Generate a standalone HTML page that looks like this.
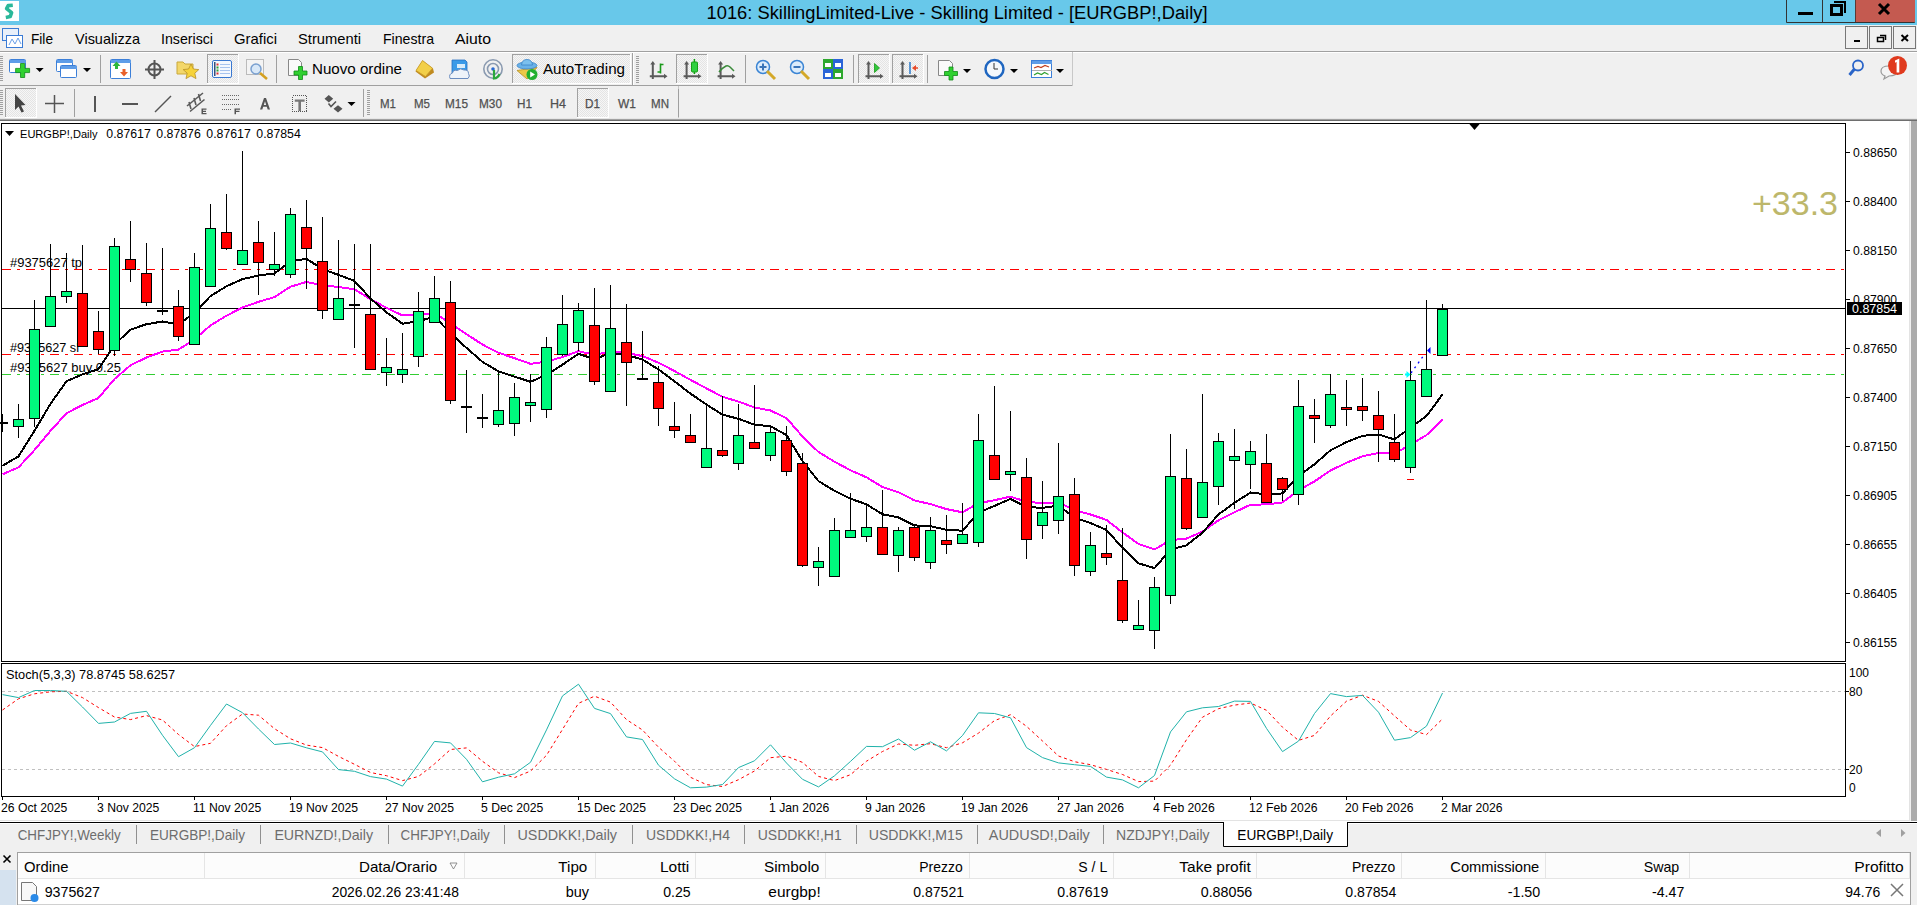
<!DOCTYPE html><html><head><meta charset="utf-8"><style>
*{margin:0;padding:0}
html,body{width:1917px;height:905px;overflow:hidden;background:#f0f0f0}
svg{display:block;font-family:"Liberation Sans", sans-serif}
</style></head><body><svg width="1917" height="905" viewBox="0 0 1917 905"><defs><pattern id="chk" width="2" height="2" patternUnits="userSpaceOnUse"><rect width="2" height="2" fill="#f6f6f6"/><rect width="1" height="1" fill="#e4e4e4"/><rect x="1" y="1" width="1" height="1" fill="#e4e4e4"/></pattern></defs><rect x="0" y="0" width="1917" height="905" fill="#f0f0f0"/><rect x="0" y="0" width="1917" height="25" fill="#68c8ea"/><rect x="0" y="1" width="19" height="20" fill="#ffffff"/><path d="M12.8,5.2 L8.2,5.6 L6.6,8.6 L11.6,12.6 L10.2,16.6 L5.8,17.4" fill="none" stroke="#2ab89a" stroke-width="3.6" stroke-linejoin="round"/><text x="957" y="19" font-size="18" fill="#000" text-anchor="middle" font-weight="normal" textLength="501" lengthAdjust="spacingAndGlyphs" xml:space="preserve">1016: SkillingLimited-Live - Skilling Limited - [EURGBP!,Daily]</text><path d="M1786.5,0 V22.5 H1914.5 V0" fill="none" stroke="#333" stroke-width="1"/><rect x="1855" y="0" width="60" height="22" fill="#c45a50"/><rect x="1855" y="0" width="1" height="22" fill="#5a3a36"/><line x1="1822.5" y1="0" x2="1822.5" y2="22" stroke="#333"/><rect x="1798" y="12" width="15" height="3" fill="#000"/><rect x="1831.5" y="5.5" width="10" height="9" fill="none" stroke="#000" stroke-width="3"/><path d="M1834,2 H1845 V13" fill="none" stroke="#000" stroke-width="2"/><path d="M1879,4 L1889,14 M1889,4 L1879,14" stroke="#000" stroke-width="3"/><rect x="2.5" y="28.5" width="16" height="12" fill="#e8f0fa" stroke="#3a7bd5"/><rect x="6.5" y="35.5" width="16" height="12" fill="#ffffff" stroke="#3a7bd5"/><path d="M9,45 L12,39 L15,44 L18,38 L21,44" fill="none" stroke="#6aa0e8"/><text x="31" y="44" font-size="15" fill="#000" text-anchor="start" font-weight="normal" textLength="22" lengthAdjust="spacingAndGlyphs" xml:space="preserve">File</text><text x="75" y="44" font-size="15" fill="#000" text-anchor="start" font-weight="normal" textLength="65" lengthAdjust="spacingAndGlyphs" xml:space="preserve">Visualizza</text><text x="161" y="44" font-size="15" fill="#000" text-anchor="start" font-weight="normal" textLength="52" lengthAdjust="spacingAndGlyphs" xml:space="preserve">Inserisci</text><text x="234" y="44" font-size="15" fill="#000" text-anchor="start" font-weight="normal" textLength="43" lengthAdjust="spacingAndGlyphs" xml:space="preserve">Grafici</text><text x="298" y="44" font-size="15" fill="#000" text-anchor="start" font-weight="normal" textLength="63" lengthAdjust="spacingAndGlyphs" xml:space="preserve">Strumenti</text><text x="383" y="44" font-size="15" fill="#000" text-anchor="start" font-weight="normal" textLength="51" lengthAdjust="spacingAndGlyphs" xml:space="preserve">Finestra</text><text x="455" y="44" font-size="15" fill="#000" text-anchor="start" font-weight="normal" textLength="36" lengthAdjust="spacingAndGlyphs" xml:space="preserve">Aiuto</text><rect x="1845.5" y="26.5" width="22" height="22" fill="#f0f0f0" stroke="#777" stroke-width="1"/><rect x="1869.5" y="26.5" width="22" height="22" fill="#f0f0f0" stroke="#777" stroke-width="1"/><rect x="1893.5" y="26.5" width="22" height="22" fill="#f0f0f0" stroke="#777" stroke-width="1"/><rect x="1854" y="40" width="6" height="2" fill="#000"/><rect x="1877.5" y="37.5" width="6" height="4" fill="none" stroke="#000" stroke-width="1.5"/><path d="M1880,35.5 H1885.5 V40" fill="none" stroke="#000" stroke-width="1.5"/><path d="M1901.5,35 L1908,41 M1908,35 L1901.5,41" stroke="#000" stroke-width="2"/><rect x="0" y="51" width="1917" height="1" fill="#a0a0a0"/><rect x="0" y="52" width="1917" height="1" fill="#ffffff"/><rect x="0" y="85" width="1072" height="1" fill="#a0a0a0"/><rect x="1072" y="52" width="1" height="34" fill="#c8c8c8"/><rect x="0" y="56" width="3" height="1" fill="#a0a0a0"/><rect x="0" y="58" width="3" height="1" fill="#a0a0a0"/><rect x="0" y="60" width="3" height="1" fill="#a0a0a0"/><rect x="0" y="62" width="3" height="1" fill="#a0a0a0"/><rect x="0" y="64" width="3" height="1" fill="#a0a0a0"/><rect x="0" y="66" width="3" height="1" fill="#a0a0a0"/><rect x="0" y="68" width="3" height="1" fill="#a0a0a0"/><rect x="0" y="70" width="3" height="1" fill="#a0a0a0"/><rect x="0" y="72" width="3" height="1" fill="#a0a0a0"/><rect x="0" y="74" width="3" height="1" fill="#a0a0a0"/><rect x="0" y="76" width="3" height="1" fill="#a0a0a0"/><rect x="0" y="78" width="3" height="1" fill="#a0a0a0"/><rect x="0" y="80" width="3" height="1" fill="#a0a0a0"/><rect x="9.5" y="59.5" width="16" height="13" fill="#ffffff" stroke="#3c7fd8" rx="1"/><rect x="10" y="60" width="16" height="3" fill="#5e9de8"/><path d="M20.5,63.5 h4.2 v4.9 h4.9 v4.2 h-4.9 v4.9 h-4.2 v-4.9 h-4.9 v-4.2 h4.9 z" fill="#30d030" stroke="#108a18" stroke-width="0.8"/><path d="M35.7,68 h8 l-4,4 z" fill="#000"/><rect x="56.5" y="59.5" width="16" height="12" fill="#ffffff" stroke="#3c7fd8" rx="1"/><rect x="57" y="60" width="16" height="3" fill="#5e9de8"/><rect x="60.5" y="65.5" width="16" height="12" fill="#ffffff" stroke="#3c7fd8" rx="1"/><rect x="61" y="66" width="16" height="3" fill="#5e9de8"/><path d="M83,68 h8 l-4,4 z" fill="#000"/><rect x="100" y="55" width="1" height="28" fill="#a0a0a0"/><rect x="110.5" y="59.5" width="20" height="19" fill="#ffffff" stroke="#3c7fd8" rx="1"/><rect x="111" y="60" width="20" height="3" fill="#5e9de8"/><path d="M112.5,66 L116.5,61.5 L120.5,66 H118 V69 H115 V66 Z" fill="#2fb83a"/><path d="M120,72 H122.5 V69 H125.5 V72 H128 L124,76.5 Z" fill="#e8602a"/><circle cx="154.5" cy="69.5" r="6" fill="none" stroke="#555" stroke-width="2"/><path d="M154.5,60 V79 M145,69.5 H164" stroke="#555" stroke-width="2"/><path d="M177,62 h6 l2,2 h8 v10 h-16 z" fill="#f3d76a" stroke="#c9a83a"/><path d="M191,64 l2.4,5 5.4,.6 -4,3.6 1.2,5.4 -5,-2.8 -5,2.8 1.2,-5.4 -4,-3.6 5.4,-.6z" fill="#f6d33a" stroke="#b8902a" stroke-width="0.8"/><rect x="207" y="54" width="31" height="29" fill="url(#chk)"/><rect x="207" y="54" width="31" height="1" fill="#a0a0a0"/><rect x="207" y="54" width="1" height="29" fill="#a0a0a0"/><rect x="207" y="83" width="32" height="1" fill="#ffffff"/><rect x="238" y="54" width="1" height="29" fill="#ffffff"/><rect x="212.5" y="60.5" width="19" height="17" rx="1.5" fill="#f4f8fe" stroke="#3a78d0"/><rect x="214" y="62" width="1.5" height="14" fill="#34507a"/><rect x="216.5" y="63.5" width="2" height="2" fill="#e03030"/><rect x="220" y="64" width="10" height="1" fill="#a8c4ee"/><rect x="216.5" y="66.5" width="2" height="2" fill="#30a030"/><rect x="220" y="67" width="10" height="1" fill="#a8c4ee"/><rect x="216.5" y="69.5" width="2" height="2" fill="#30a030"/><rect x="220" y="70" width="10" height="1" fill="#a8c4ee"/><rect x="216.5" y="72.5" width="2" height="2" fill="#e03030"/><rect x="220" y="73" width="10" height="1" fill="#a8c4ee"/><rect x="246.5" y="59.5" width="17" height="15" fill="#f4f4f4" stroke="#bbb"/><circle cx="256" cy="69" r="5" fill="#d8e8f8" stroke="#7aa0d0" stroke-width="1.5"/><path d="M260,73 L267,79" stroke="#d4a020" stroke-width="2.5"/><rect x="276" y="55" width="1" height="28" fill="#a0a0a0"/><path d="M288.5,59.5 h10 l3,3 v13 h-13 z" fill="#fafafa" stroke="#888"/><path d="M298.5,66.5 h4 v4.5 h4.5 v4 h-4.5 v4.5 h-4 v-4.5 h-4.5 v-4 h4.5 z" fill="#30d030" stroke="#108a18" stroke-width="0.8"/><text x="312" y="74" font-size="15" fill="#000" text-anchor="start" font-weight="normal" textLength="90" lengthAdjust="spacingAndGlyphs" xml:space="preserve">Nuovo ordine</text><path d="M415.5,71.5 L422.5,60.5 L433,68.5 L434,72.5 L425,78.5 Z" fill="#c08a20"/><path d="M416,70.5 L422.5,60.5 L432.5,68.2 L425.5,76.5 Z" fill="#f2cf48" stroke="#c89a28" stroke-width="0.8"/><path d="M452,60 H465 L467,62 V73 H452 Z" fill="#3a9ae8" stroke="#2a70c0" stroke-width="0.8"/><rect x="457" y="64" width="8" height="4" fill="#d8ecfb"/><path d="M450,78.5 Q448.5,74 452.5,73 Q453,69.5 457.5,70.5 Q460,67.5 464,70 Q468.5,69.5 468.5,73.5 Q470.5,76 468,78.5 Z" fill="#eef3fa" stroke="#6a8cc0" stroke-width="1"/><circle cx="493" cy="69" r="9.2" fill="none" stroke="#8a9ab0" stroke-width="1.6"/><circle cx="493" cy="69" r="5.5" fill="none" stroke="#8a9ab0" stroke-width="1.6"/><circle cx="493" cy="69" r="1.8" fill="#2a6ad0"/><path d="M494,70 V78.5 Q498,78 499.5,74" fill="none" stroke="#2aa83a" stroke-width="2.2"/><rect x="512" y="54" width="118" height="29" fill="url(#chk)"/><rect x="512" y="54" width="118" height="1" fill="#a0a0a0"/><rect x="512" y="54" width="1" height="29" fill="#a0a0a0"/><rect x="512" y="83" width="119" height="1" fill="#ffffff"/><rect x="630" y="54" width="1" height="29" fill="#ffffff"/><path d="M517,70.5 L537,67.5 L527,79 Z" fill="#ecc848" stroke="#b89020" stroke-width="0.8"/><ellipse cx="527" cy="65.5" rx="10" ry="3.5" fill="#6ab2e8" stroke="#3a84c8" stroke-width="0.8"/><path d="M521.5,65 Q522,59.5 527,59.5 Q532,59.5 532.5,65 Z" fill="#7cc0ee" stroke="#3a84c8" stroke-width="0.8"/><circle cx="532" cy="74.5" r="5.5" fill="#22b030"/><path d="M530.2,71.5 L535,74.5 L530.2,77.5 Z" fill="#fff"/><text x="543" y="74" font-size="15" fill="#000" text-anchor="start" font-weight="normal" textLength="82" lengthAdjust="spacingAndGlyphs" xml:space="preserve">AutoTrading</text><rect x="632" y="53" width="1" height="32" fill="#a0a0a0"/><rect x="633" y="53" width="1" height="32" fill="#ffffff"/><rect x="636" y="56" width="3" height="1" fill="#a0a0a0"/><rect x="636" y="58" width="3" height="1" fill="#a0a0a0"/><rect x="636" y="60" width="3" height="1" fill="#a0a0a0"/><rect x="636" y="62" width="3" height="1" fill="#a0a0a0"/><rect x="636" y="64" width="3" height="1" fill="#a0a0a0"/><rect x="636" y="66" width="3" height="1" fill="#a0a0a0"/><rect x="636" y="68" width="3" height="1" fill="#a0a0a0"/><rect x="636" y="70" width="3" height="1" fill="#a0a0a0"/><rect x="636" y="72" width="3" height="1" fill="#a0a0a0"/><rect x="636" y="74" width="3" height="1" fill="#a0a0a0"/><rect x="636" y="76" width="3" height="1" fill="#a0a0a0"/><rect x="636" y="78" width="3" height="1" fill="#a0a0a0"/><rect x="636" y="80" width="3" height="1" fill="#a0a0a0"/><rect x="636" y="82" width="3" height="1" fill="#a0a0a0"/><path d="M652.8,63 V79 M649.8,76.25 H665" stroke="#5a5a5a" stroke-width="2"/><path d="M650.3,64.5 L652.8,61 L655.3,64.5 Z M664,73.75 L667.5,76.25 L664,78.75 Z" fill="#5a5a5a"/><path d="M657.5,72 H660.5 M660.5,73.5 V63.5 M660.5,64.5 H663.5" fill="none" stroke="#1a9a1a" stroke-width="1.6"/><rect x="676" y="54" width="31" height="29" fill="url(#chk)"/><rect x="676" y="54" width="31" height="1" fill="#a0a0a0"/><rect x="676" y="54" width="1" height="29" fill="#a0a0a0"/><rect x="676" y="83" width="32" height="1" fill="#ffffff"/><rect x="707" y="54" width="1" height="29" fill="#ffffff"/><path d="M686.6,63 V79 M683.6,76.25 H699" stroke="#5a5a5a" stroke-width="2"/><path d="M684.1,64.5 L686.6,61 L689.1,64.5 Z M698,73.75 L701.5,76.25 L698,78.75 Z" fill="#5a5a5a"/><path d="M694.4,59 V74" stroke="#10a010" stroke-width="1.5"/><rect x="691.5" y="62" width="6" height="10" rx="1" fill="#30d040" stroke="#18a018"/><path d="M720.6,63 V79 M717.6,76.25 H733" stroke="#5a5a5a" stroke-width="2"/><path d="M718.1,64.5 L720.6,61 L723.1,64.5 Z M732,73.75 L735.5,76.25 L732,78.75 Z" fill="#5a5a5a"/><path d="M719,72 Q722,68 726,66 Q728,65 730,67 L734,71" fill="none" stroke="#3a8a3a" stroke-width="1.5"/><rect x="745" y="55" width="1" height="28" fill="#a0a0a0"/><circle cx="763" cy="67" r="6.5" fill="#dcecfb" stroke="#3a84d4" stroke-width="1.5"/><path d="M767,71 L775,79" stroke="#d4a828" stroke-width="3"/><path d="M759.5,67 H766.5 M763,63.5 V70.5" stroke="#3a74b8" stroke-width="2"/><circle cx="797" cy="67" r="6.5" fill="#dcecfb" stroke="#3a84d4" stroke-width="1.5"/><path d="M801,71 L809,79" stroke="#d4a828" stroke-width="3"/><path d="M793.5,67 H800.5" stroke="#3a74b8" stroke-width="2"/><rect x="823" y="59" width="10" height="10" fill="#2ea82e"/><rect x="833" y="59" width="10" height="10" fill="#2a64d8"/><rect x="823" y="69" width="10" height="10" fill="#2a64d8"/><rect x="833" y="69" width="10" height="10" fill="#2ea82e"/><rect x="825" y="63" width="6" height="4" fill="#ffffff"/><rect x="835" y="63" width="6" height="4" fill="#ffffff"/><rect x="825" y="73" width="6" height="4" fill="#ffffff"/><rect x="835" y="73" width="6" height="4" fill="#ffffff"/><rect x="853" y="55" width="1" height="28" fill="#a0a0a0"/><rect x="858" y="54" width="31" height="29" fill="url(#chk)"/><rect x="858" y="54" width="31" height="1" fill="#a0a0a0"/><rect x="858" y="54" width="1" height="29" fill="#a0a0a0"/><rect x="858" y="83" width="32" height="1" fill="#ffffff"/><rect x="889" y="54" width="1" height="29" fill="#ffffff"/><path d="M868.5,63 V79 M865.5,76.25 H881" stroke="#5a5a5a" stroke-width="2"/><path d="M866.0,64.5 L868.5,61 L871.0,64.5 Z M880,73.75 L883.5,76.25 L880,78.75 Z" fill="#5a5a5a"/><path d="M874.5,63.5 l5,4.5 -5,4.5z" fill="#2fc83a" stroke="#1a9a1a" stroke-width="0.8"/><rect x="892" y="54" width="31" height="29" fill="url(#chk)"/><rect x="892" y="54" width="31" height="1" fill="#a0a0a0"/><rect x="892" y="54" width="1" height="29" fill="#a0a0a0"/><rect x="892" y="83" width="32" height="1" fill="#ffffff"/><rect x="923" y="54" width="1" height="29" fill="#ffffff"/><path d="M902.5,63 V79 M899.5,76.25 H915" stroke="#5a5a5a" stroke-width="2"/><path d="M900.0,64.5 L902.5,61 L905.0,64.5 Z M914,73.75 L917.5,76.25 L914,78.75 Z" fill="#5a5a5a"/><path d="M910,62 V74" stroke="#2a78c8" stroke-width="1.5"/><path d="M912,68 l4,-3 v6z" fill="#e84a2a"/><path d="M914,68 H918" stroke="#e84a2a" stroke-width="1.5"/><rect x="927" y="55" width="1" height="28" fill="#a0a0a0"/><path d="M938.5,60.5 h11 l3,3 v12 h-14 z" fill="#fafafa" stroke="#888"/><path d="M949.0,67.0 h4 v4.5 h4.5 v4 h-4.5 v4.5 h-4 v-4.5 h-4.5 v-4 h4.5 z" fill="#30d030" stroke="#108a18" stroke-width="0.8"/><path d="M963,69 h8 l-4,4 z" fill="#000"/><circle cx="994.5" cy="69" r="9" fill="#f4f8fc" stroke="#1f66c0" stroke-width="2.5"/><path d="M994,63 V69 H998" fill="none" stroke="#333" stroke-width="1"/><path d="M1010,69 h8 l-4,4 z" fill="#000"/><rect x="1031.5" y="60.5" width="20" height="17" fill="#fff" stroke="#3c7fd8"/><rect x="1032" y="61" width="20" height="3" fill="#5e9de8"/><path d="M1034,68 l4,-1.5 3,1 4,-2 4,1.5 " fill="none" stroke="#c04020" stroke-width="1.2"/><path d="M1034,75 l3.5,-2 4,1.5 3,-2 4,2" fill="none" stroke="#30a030" stroke-width="1.2"/><rect x="1032" y="70" width="20" height="1" fill="#b0b0b0"/><path d="M1056,69 h8 l-4,4 z" fill="#000"/><circle cx="1858" cy="65.5" r="5" fill="none" stroke="#2a64c8" stroke-width="1.8"/><path d="M1854.5,69 L1849.5,75" stroke="#2a64c8" stroke-width="3"/><path d="M1881,71 q0,-5 8,-5 q8,0 8,5 q0,5 -8,5 l-5,3 1,-3 q-4,-1.5 -4,-5z" fill="#f4f4f4" stroke="#999" stroke-width="1.2"/><circle cx="1897.5" cy="65.5" r="9.5" fill="#e03a1e"/><path d="M1895,60.5 L1899.3,58.5 V72.5 H1896.6 V62 L1895,62.8 Z" fill="#fff"/><rect x="678" y="86" width="1" height="33" fill="#c8c8c8"/><rect x="0" y="118" width="1917" height="1" fill="#e6e6e6"/><rect x="0" y="119" width="1917" height="1" fill="#a0a0a0"/><rect x="0" y="120" width="1917" height="1" fill="#6e6e6e"/><rect x="0" y="90" width="3" height="1" fill="#a0a0a0"/><rect x="0" y="92" width="3" height="1" fill="#a0a0a0"/><rect x="0" y="94" width="3" height="1" fill="#a0a0a0"/><rect x="0" y="96" width="3" height="1" fill="#a0a0a0"/><rect x="0" y="98" width="3" height="1" fill="#a0a0a0"/><rect x="0" y="100" width="3" height="1" fill="#a0a0a0"/><rect x="0" y="102" width="3" height="1" fill="#a0a0a0"/><rect x="0" y="104" width="3" height="1" fill="#a0a0a0"/><rect x="0" y="106" width="3" height="1" fill="#a0a0a0"/><rect x="0" y="108" width="3" height="1" fill="#a0a0a0"/><rect x="0" y="110" width="3" height="1" fill="#a0a0a0"/><rect x="0" y="112" width="3" height="1" fill="#a0a0a0"/><rect x="0" y="114" width="3" height="1" fill="#a0a0a0"/><rect x="5" y="88" width="31" height="29" fill="url(#chk)"/><rect x="5" y="88" width="31" height="1" fill="#a0a0a0"/><rect x="5" y="88" width="1" height="29" fill="#a0a0a0"/><rect x="5" y="117" width="32" height="1" fill="#ffffff"/><rect x="36" y="88" width="1" height="29" fill="#ffffff"/><path d="M15,94 V110 L18.5,106.5 L21.5,112.5 L24,111.5 L21,105.5 L25.5,105 Z" fill="#444"/><path d="M54.5,95 V113 M45,103.5 H64" stroke="#555" stroke-width="1.5"/><rect x="74" y="89" width="1" height="28" fill="#a0a0a0"/><rect x="94" y="96" width="2" height="16" fill="#555"/><rect x="122" y="103" width="16" height="2" fill="#555"/><path d="M155,112 L171,96" stroke="#555" stroke-width="1.5"/><path d="M187,106 L203,93 M190,111.5 L204.5,99.5 M191,109 L189,102 M196,105 L194,98 M200.5,101 L198.5,94" fill="none" stroke="#5a5a5a" stroke-width="1.6"/><path d="M201.5,108.5 H206.5 V109.8 H203 V110.8 H206 V112 H203 V113 H206.5 V114.3 H201.5 Z" fill="#555"/><path d="M222,95.5 H239.5" stroke="#6a6a6a" stroke-width="1.3" stroke-dasharray="1,1" shape-rendering="crispEdges"/><path d="M222,99.5 H239.5" stroke="#6a6a6a" stroke-width="1.3" stroke-dasharray="1,1" shape-rendering="crispEdges"/><path d="M222,104.5 H239.5" stroke="#6a6a6a" stroke-width="1.3" stroke-dasharray="1,1" shape-rendering="crispEdges"/><path d="M222,109.5 H231.5" stroke="#6a6a6a" stroke-width="1.3" stroke-dasharray="1,1" shape-rendering="crispEdges"/><path d="M234.5,108.5 H240 V109.8 H236 V110.8 H239.5 V112 H236 V114.3 H234.5 Z" fill="#555"/><path d="M260,109.5 L264,98 H266 L270,109.5 H267.7 L266.8,106.8 H263.2 L262.3,109.5 Z M263.8,105 H266.2 L265,101.2 Z" fill="#555" fill-rule="evenodd"/><rect x="292.5" y="95.5" width="14" height="16" fill="none" stroke="#555" stroke-dasharray="1,1" shape-rendering="crispEdges"/><path d="M294.8,99.5 H304.6 V101.8 H301 V111 H298.4 V101.8 H294.8 Z" fill="#777"/><path d="M324.5,98.8 L328.8,95 L333.2,98.8 L328.8,102.5 Z M333.5,108.8 L338,105.2 L342.5,108.8 L338,112.5 Z" fill="#555"/><path d="M328.5,103.5 L331,106.5 L336,101.5" fill="none" stroke="#555" stroke-width="1.6"/><path d="M347.5,102 h8 l-4,4 z" fill="#000"/><rect x="363" y="89" width="1" height="28" fill="#a0a0a0"/><rect x="367" y="90" width="3" height="1" fill="#a0a0a0"/><rect x="367" y="92" width="3" height="1" fill="#a0a0a0"/><rect x="367" y="94" width="3" height="1" fill="#a0a0a0"/><rect x="367" y="96" width="3" height="1" fill="#a0a0a0"/><rect x="367" y="98" width="3" height="1" fill="#a0a0a0"/><rect x="367" y="100" width="3" height="1" fill="#a0a0a0"/><rect x="367" y="102" width="3" height="1" fill="#a0a0a0"/><rect x="367" y="104" width="3" height="1" fill="#a0a0a0"/><rect x="367" y="106" width="3" height="1" fill="#a0a0a0"/><rect x="367" y="108" width="3" height="1" fill="#a0a0a0"/><rect x="367" y="110" width="3" height="1" fill="#a0a0a0"/><rect x="367" y="112" width="3" height="1" fill="#a0a0a0"/><rect x="367" y="114" width="3" height="1" fill="#a0a0a0"/><rect x="577" y="88" width="31" height="29" fill="url(#chk)"/><rect x="577" y="88" width="31" height="1" fill="#a0a0a0"/><rect x="577" y="88" width="1" height="29" fill="#a0a0a0"/><rect x="577" y="117" width="32" height="1" fill="#ffffff"/><rect x="608" y="88" width="1" height="29" fill="#ffffff"/><text x="380" y="108" font-size="12" fill="#505050" text-anchor="start" font-weight="normal" textLength="16" lengthAdjust="spacingAndGlyphs" xml:space="preserve" stroke="#505050" stroke-width="0.25">M1</text><text x="414" y="108" font-size="12" fill="#505050" text-anchor="start" font-weight="normal" textLength="16" lengthAdjust="spacingAndGlyphs" xml:space="preserve" stroke="#505050" stroke-width="0.25">M5</text><text x="445" y="108" font-size="12" fill="#505050" text-anchor="start" font-weight="normal" textLength="23" lengthAdjust="spacingAndGlyphs" xml:space="preserve" stroke="#505050" stroke-width="0.25">M15</text><text x="479" y="108" font-size="12" fill="#505050" text-anchor="start" font-weight="normal" textLength="23" lengthAdjust="spacingAndGlyphs" xml:space="preserve" stroke="#505050" stroke-width="0.25">M30</text><text x="517" y="108" font-size="12" fill="#505050" text-anchor="start" font-weight="normal" textLength="15" lengthAdjust="spacingAndGlyphs" xml:space="preserve" stroke="#505050" stroke-width="0.25">H1</text><text x="550" y="108" font-size="12" fill="#505050" text-anchor="start" font-weight="normal" textLength="16" lengthAdjust="spacingAndGlyphs" xml:space="preserve" stroke="#505050" stroke-width="0.25">H4</text><text x="585" y="108" font-size="12" fill="#505050" text-anchor="start" font-weight="normal" textLength="15" lengthAdjust="spacingAndGlyphs" xml:space="preserve" stroke="#505050" stroke-width="0.25">D1</text><text x="618" y="108" font-size="12" fill="#505050" text-anchor="start" font-weight="normal" textLength="18" lengthAdjust="spacingAndGlyphs" xml:space="preserve" stroke="#505050" stroke-width="0.25">W1</text><text x="651" y="108" font-size="12" fill="#505050" text-anchor="start" font-weight="normal" textLength="18" lengthAdjust="spacingAndGlyphs" xml:space="preserve" stroke="#505050" stroke-width="0.25">MN</text><rect x="678" y="89" width="1" height="28" fill="#a0a0a0"/><rect x="0" y="121" width="1910" height="700" fill="#ffffff"/><rect x="1" y="123" width="1845" height="1" fill="#000"/><rect x="1" y="661" width="1845" height="1" fill="#000"/><rect x="1" y="123" width="1" height="539" fill="#000"/><rect x="1845" y="123" width="1" height="539" fill="#000"/><rect x="1" y="663" width="1845" height="1" fill="#000"/><rect x="1" y="796" width="1845" height="1" fill="#000"/><rect x="1" y="663" width="1" height="134" fill="#000"/><rect x="1845" y="663" width="1" height="134" fill="#000"/><rect x="1911" y="121" width="6" height="701" fill="#ababab"/><text x="10" y="266.7" font-size="12" fill="#000" text-anchor="start" font-weight="normal" textLength="72" lengthAdjust="spacingAndGlyphs" xml:space="preserve">#9375627 tp</text><text x="10" y="351.7" font-size="12" fill="#000" text-anchor="start" font-weight="normal" textLength="69" lengthAdjust="spacingAndGlyphs" xml:space="preserve">#9375627 sl</text><text x="10" y="371.7" font-size="12" fill="#000" text-anchor="start" font-weight="normal" textLength="111" lengthAdjust="spacingAndGlyphs" xml:space="preserve">#9375627 buy 0.25</text><g shape-rendering="crispEdges"><line x1="2" y1="269.5" x2="1845" y2="269.5" stroke="#ff0000" stroke-dasharray="9,6,3,6"/><line x1="2" y1="354.5" x2="1845" y2="354.5" stroke="#ff0000" stroke-dasharray="9,6,3,6"/><line x1="2" y1="374.5" x2="1845" y2="374.5" stroke="#32cd32" stroke-dasharray="9,6,3,6"/></g><line x1="2" y1="308.5" x2="1845" y2="308.5" stroke="#000"/><polyline points="2.5,474.3 18.5,467.4 34.5,450.0 50.5,430.8 66.5,413.3 82.5,404.9 98.5,398.0 114.5,379.0 130.5,365.3 146.5,357.5 162.5,351.6 178.5,349.6 194.5,339.3 210.5,325.4 226.5,315.7 242.5,307.5 258.5,301.8 274.5,297.1 290.5,286.7 306.5,281.9 322.5,285.4 338.5,287.0 354.5,289.3 370.5,299.3 386.5,307.8 402.5,315.5 418.5,314.9 434.5,312.9 450.5,323.7 466.5,334.1 482.5,344.6 498.5,352.7 514.5,358.2 530.5,363.8 546.5,361.7 562.5,357.0 578.5,351.2 594.5,354.8 610.5,351.5 626.5,352.9 642.5,356.1 658.5,362.7 674.5,371.0 690.5,379.9 706.5,388.4 722.5,396.8 738.5,401.6 754.5,407.4 770.5,410.5 786.5,418.1 802.5,436.5 818.5,452.0 834.5,461.7 850.5,470.3 866.5,477.3 882.5,487.0 898.5,492.3 914.5,500.4 930.5,504.1 946.5,509.1 962.5,512.3 978.5,503.2 994.5,500.2 1010.5,496.6 1026.5,501.8 1042.5,503.1 1058.5,502.2 1074.5,510.1 1090.5,514.5 1106.5,519.9 1122.5,532.4 1138.5,543.9 1154.5,549.4 1170.5,540.2 1186.5,538.6 1202.5,531.6 1218.5,520.3 1234.5,512.3 1250.5,504.7 1266.5,504.4 1282.5,502.5 1298.5,490.3 1314.5,481.4 1330.5,470.5 1346.5,462.8 1362.5,456.3 1378.5,452.9 1394.5,453.7 1410.5,444.5 1426.5,435.1 1442.5,419.3" fill="none" stroke="#ff00ff" stroke-width="2" shape-rendering="crispEdges"/><polyline points="2.5,465.7 18.5,456.4 34.5,430.8 50.5,403.8 66.5,381.3 82.5,374.3 98.5,369.2 114.5,344.7 130.5,329.6 146.5,324.2 162.5,321.5 178.5,324.4 194.5,312.9 210.5,296.0 226.5,286.3 242.5,279.1 258.5,275.6 274.5,273.4 290.5,261.5 306.5,258.8 322.5,269.1 338.5,274.9 354.5,280.9 370.5,298.6 386.5,312.3 402.5,323.7 418.5,321.2 434.5,316.6 450.5,333.2 466.5,347.9 482.5,361.9 498.5,371.4 514.5,376.6 530.5,381.8 546.5,374.8 562.5,364.7 578.5,353.8 594.5,359.2 610.5,353.0 626.5,354.9 642.5,359.6 658.5,369.4 674.5,381.4 690.5,393.6 706.5,404.5 722.5,414.7 738.5,418.8 754.5,424.7 770.5,426.2 786.5,435.1 802.5,461.1 818.5,481.1 834.5,490.8 850.5,498.7 866.5,504.3 882.5,514.3 898.5,517.4 914.5,525.4 930.5,526.2 946.5,529.8 962.5,530.7 978.5,512.6 994.5,505.9 1010.5,498.9 1026.5,506.9 1042.5,507.9 1058.5,505.5 1074.5,517.5 1090.5,523.0 1106.5,529.9 1122.5,547.9 1138.5,563.3 1154.5,568.1 1170.5,549.6 1186.5,545.3 1202.5,532.7 1218.5,514.4 1234.5,502.8 1250.5,492.5 1266.5,494.4 1282.5,493.4 1298.5,475.8 1314.5,464.3 1330.5,450.3 1346.5,442.1 1362.5,435.8 1378.5,434.5 1394.5,439.4 1410.5,427.6 1426.5,416.0 1442.5,394.5" fill="none" stroke="#000" stroke-width="2" shape-rendering="crispEdges"/><g shape-rendering="crispEdges"><rect x="2" y="414" width="1" height="18" fill="#000"/><rect x="-3" y="422" width="11" height="2" fill="#000"/><rect x="18" y="404" width="1" height="34" fill="#000"/><rect x="13.5" y="419.5" width="10" height="7" fill="#00fa7d" stroke="#000"/><rect x="34" y="300" width="1" height="127" fill="#000"/><rect x="29.5" y="329.5" width="10" height="89" fill="#00fa7d" stroke="#000"/><rect x="50" y="244" width="1" height="83" fill="#000"/><rect x="45.5" y="296.5" width="10" height="30" fill="#00fa7d" stroke="#000"/><rect x="66" y="253" width="1" height="50" fill="#000"/><rect x="61.5" y="291.5" width="10" height="5" fill="#00fa7d" stroke="#000"/><rect x="82" y="245" width="1" height="101" fill="#000"/><rect x="77.5" y="293.5" width="10" height="53" fill="#ff0000" stroke="#000"/><rect x="98" y="311" width="1" height="43" fill="#000"/><rect x="93.5" y="331.5" width="10" height="18" fill="#ff0000" stroke="#000"/><rect x="114" y="238" width="1" height="118" fill="#000"/><rect x="109.5" y="246.5" width="10" height="104" fill="#00fa7d" stroke="#000"/><rect x="130" y="221" width="1" height="61" fill="#000"/><rect x="125.5" y="259.5" width="10" height="10" fill="#ff0000" stroke="#000"/><rect x="146" y="243" width="1" height="63" fill="#000"/><rect x="141.5" y="273.5" width="10" height="29" fill="#ff0000" stroke="#000"/><rect x="162" y="248" width="1" height="67" fill="#000"/><rect x="157" y="310" width="11" height="2" fill="#000"/><rect x="178" y="290" width="1" height="51" fill="#000"/><rect x="173.5" y="306.5" width="10" height="30" fill="#ff0000" stroke="#000"/><rect x="194" y="253" width="1" height="92" fill="#000"/><rect x="189.5" y="267.5" width="10" height="77" fill="#00fa7d" stroke="#000"/><rect x="210" y="204" width="1" height="82" fill="#000"/><rect x="205.5" y="228.5" width="10" height="58" fill="#00fa7d" stroke="#000"/><rect x="226" y="194" width="1" height="56" fill="#000"/><rect x="221.5" y="232.5" width="10" height="16" fill="#ff0000" stroke="#000"/><rect x="242" y="151" width="1" height="113" fill="#000"/><rect x="237.5" y="250.5" width="10" height="14" fill="#00fa7d" stroke="#000"/><rect x="258" y="221" width="1" height="74" fill="#000"/><rect x="253.5" y="242.5" width="10" height="20" fill="#ff0000" stroke="#000"/><rect x="274" y="232" width="1" height="44" fill="#000"/><rect x="269.5" y="264.5" width="10" height="5" fill="#00fa7d" stroke="#000"/><rect x="290" y="208" width="1" height="70" fill="#000"/><rect x="285.5" y="214.5" width="10" height="60" fill="#00fa7d" stroke="#000"/><rect x="306" y="200" width="1" height="89" fill="#000"/><rect x="301.5" y="227.5" width="10" height="21" fill="#ff0000" stroke="#000"/><rect x="322" y="217" width="1" height="102" fill="#000"/><rect x="317.5" y="261.5" width="10" height="49" fill="#ff0000" stroke="#000"/><rect x="338" y="240" width="1" height="79" fill="#000"/><rect x="333.5" y="298.5" width="10" height="21" fill="#00fa7d" stroke="#000"/><rect x="354" y="244" width="1" height="104" fill="#000"/><rect x="349" y="304" width="11" height="2" fill="#000"/><rect x="370" y="244" width="1" height="125" fill="#000"/><rect x="365.5" y="314.5" width="10" height="55" fill="#ff0000" stroke="#000"/><rect x="386" y="338" width="1" height="48" fill="#000"/><rect x="381.5" y="367.5" width="10" height="5" fill="#00fa7d" stroke="#000"/><rect x="402" y="333" width="1" height="50" fill="#000"/><rect x="397.5" y="369.5" width="10" height="5" fill="#00fa7d" stroke="#000"/><rect x="418" y="292" width="1" height="75" fill="#000"/><rect x="413.5" y="311.5" width="10" height="45" fill="#00fa7d" stroke="#000"/><rect x="434" y="276" width="1" height="46" fill="#000"/><rect x="429.5" y="298.5" width="10" height="24" fill="#00fa7d" stroke="#000"/><rect x="450" y="281" width="1" height="123" fill="#000"/><rect x="445.5" y="302.5" width="10" height="98" fill="#ff0000" stroke="#000"/><rect x="466" y="370" width="1" height="63" fill="#000"/><rect x="461" y="406" width="11" height="2" fill="#000"/><rect x="482" y="394" width="1" height="34" fill="#000"/><rect x="477" y="417" width="11" height="2" fill="#000"/><rect x="498" y="372" width="1" height="55" fill="#000"/><rect x="493.5" y="410.5" width="10" height="14" fill="#00fa7d" stroke="#000"/><rect x="514" y="383" width="1" height="53" fill="#000"/><rect x="509.5" y="397.5" width="10" height="26" fill="#00fa7d" stroke="#000"/><rect x="530" y="374" width="1" height="48" fill="#000"/><rect x="525.5" y="402.5" width="10" height="3" fill="#00fa7d" stroke="#000"/><rect x="546" y="337" width="1" height="81" fill="#000"/><rect x="541.5" y="347.5" width="10" height="62" fill="#00fa7d" stroke="#000"/><rect x="562" y="295" width="1" height="61" fill="#000"/><rect x="557.5" y="324.5" width="10" height="30" fill="#00fa7d" stroke="#000"/><rect x="578" y="303" width="1" height="48" fill="#000"/><rect x="573.5" y="310.5" width="10" height="32" fill="#00fa7d" stroke="#000"/><rect x="594" y="288" width="1" height="97" fill="#000"/><rect x="589.5" y="325.5" width="10" height="56" fill="#ff0000" stroke="#000"/><rect x="610" y="285" width="1" height="106" fill="#000"/><rect x="605.5" y="328.5" width="10" height="63" fill="#00fa7d" stroke="#000"/><rect x="626" y="304" width="1" height="102" fill="#000"/><rect x="621.5" y="342.5" width="10" height="20" fill="#ff0000" stroke="#000"/><rect x="642" y="331" width="1" height="48" fill="#000"/><rect x="637" y="378" width="11" height="2" fill="#000"/><rect x="658" y="366" width="1" height="60" fill="#000"/><rect x="653.5" y="382.5" width="10" height="26" fill="#ff0000" stroke="#000"/><rect x="674" y="402" width="1" height="36" fill="#000"/><rect x="669.5" y="426.5" width="10" height="4" fill="#ff0000" stroke="#000"/><rect x="690" y="414" width="1" height="28" fill="#000"/><rect x="685.5" y="435.5" width="10" height="7" fill="#ff0000" stroke="#000"/><rect x="706" y="405" width="1" height="62" fill="#000"/><rect x="701.5" y="448.5" width="10" height="19" fill="#00fa7d" stroke="#000"/><rect x="722" y="396" width="1" height="61" fill="#000"/><rect x="717.5" y="450.5" width="10" height="5" fill="#ff0000" stroke="#000"/><rect x="738" y="404" width="1" height="66" fill="#000"/><rect x="733.5" y="435.5" width="10" height="28" fill="#00fa7d" stroke="#000"/><rect x="754" y="385" width="1" height="63" fill="#000"/><rect x="749.5" y="442.5" width="10" height="6" fill="#ff0000" stroke="#000"/><rect x="770" y="426" width="1" height="35" fill="#000"/><rect x="765.5" y="432.5" width="10" height="23" fill="#00fa7d" stroke="#000"/><rect x="786" y="426" width="1" height="50" fill="#000"/><rect x="781.5" y="440.5" width="10" height="31" fill="#ff0000" stroke="#000"/><rect x="802" y="453" width="1" height="114" fill="#000"/><rect x="797.5" y="463.5" width="10" height="102" fill="#ff0000" stroke="#000"/><rect x="818" y="547" width="1" height="39" fill="#000"/><rect x="813.5" y="561.5" width="10" height="6" fill="#00fa7d" stroke="#000"/><rect x="834" y="518" width="1" height="58" fill="#000"/><rect x="829.5" y="530.5" width="10" height="46" fill="#00fa7d" stroke="#000"/><rect x="850" y="493" width="1" height="44" fill="#000"/><rect x="845.5" y="530.5" width="10" height="7" fill="#00fa7d" stroke="#000"/><rect x="866" y="503" width="1" height="39" fill="#000"/><rect x="861.5" y="527.5" width="10" height="9" fill="#00fa7d" stroke="#000"/><rect x="882" y="490" width="1" height="64" fill="#000"/><rect x="877.5" y="527.5" width="10" height="27" fill="#ff0000" stroke="#000"/><rect x="898" y="527" width="1" height="45" fill="#000"/><rect x="893.5" y="530.5" width="10" height="25" fill="#00fa7d" stroke="#000"/><rect x="914" y="525" width="1" height="36" fill="#000"/><rect x="909.5" y="527.5" width="10" height="30" fill="#ff0000" stroke="#000"/><rect x="930" y="517" width="1" height="52" fill="#000"/><rect x="925.5" y="530.5" width="10" height="32" fill="#00fa7d" stroke="#000"/><rect x="946" y="515" width="1" height="39" fill="#000"/><rect x="941.5" y="540.5" width="10" height="4" fill="#ff0000" stroke="#000"/><rect x="962" y="503" width="1" height="40" fill="#000"/><rect x="957.5" y="534.5" width="10" height="9" fill="#00fa7d" stroke="#000"/><rect x="978" y="414" width="1" height="133" fill="#000"/><rect x="973.5" y="440.5" width="10" height="102" fill="#00fa7d" stroke="#000"/><rect x="994" y="386" width="1" height="93" fill="#000"/><rect x="989.5" y="455.5" width="10" height="24" fill="#ff0000" stroke="#000"/><rect x="1010" y="411" width="1" height="80" fill="#000"/><rect x="1005.5" y="471.5" width="10" height="3" fill="#00fa7d" stroke="#000"/><rect x="1026" y="458" width="1" height="101" fill="#000"/><rect x="1021.5" y="477.5" width="10" height="62" fill="#ff0000" stroke="#000"/><rect x="1042" y="481" width="1" height="58" fill="#000"/><rect x="1037.5" y="512.5" width="10" height="13" fill="#00fa7d" stroke="#000"/><rect x="1058" y="443" width="1" height="91" fill="#000"/><rect x="1053.5" y="496.5" width="10" height="24" fill="#00fa7d" stroke="#000"/><rect x="1074" y="478" width="1" height="98" fill="#000"/><rect x="1069.5" y="494.5" width="10" height="71" fill="#ff0000" stroke="#000"/><rect x="1090" y="532" width="1" height="44" fill="#000"/><rect x="1085.5" y="545.5" width="10" height="26" fill="#00fa7d" stroke="#000"/><rect x="1106" y="525" width="1" height="40" fill="#000"/><rect x="1101.5" y="553.5" width="10" height="4" fill="#ff0000" stroke="#000"/><rect x="1122" y="528" width="1" height="95" fill="#000"/><rect x="1117.5" y="580.5" width="10" height="40" fill="#ff0000" stroke="#000"/><rect x="1138" y="600" width="1" height="30" fill="#000"/><rect x="1133.5" y="625.5" width="10" height="4" fill="#00fa7d" stroke="#000"/><rect x="1154" y="577" width="1" height="72" fill="#000"/><rect x="1149.5" y="587.5" width="10" height="43" fill="#00fa7d" stroke="#000"/><rect x="1170" y="434" width="1" height="170" fill="#000"/><rect x="1165.5" y="476.5" width="10" height="119" fill="#00fa7d" stroke="#000"/><rect x="1186" y="449" width="1" height="81" fill="#000"/><rect x="1181.5" y="478.5" width="10" height="50" fill="#ff0000" stroke="#000"/><rect x="1202" y="394" width="1" height="123" fill="#000"/><rect x="1197.5" y="482.5" width="10" height="35" fill="#00fa7d" stroke="#000"/><rect x="1218" y="433" width="1" height="72" fill="#000"/><rect x="1213.5" y="441.5" width="10" height="45" fill="#00fa7d" stroke="#000"/><rect x="1234" y="429" width="1" height="80" fill="#000"/><rect x="1229.5" y="456.5" width="10" height="4" fill="#00fa7d" stroke="#000"/><rect x="1250" y="441" width="1" height="48" fill="#000"/><rect x="1245.5" y="451.5" width="10" height="13" fill="#00fa7d" stroke="#000"/><rect x="1266" y="434" width="1" height="68" fill="#000"/><rect x="1261.5" y="463.5" width="10" height="39" fill="#ff0000" stroke="#000"/><rect x="1282" y="477" width="1" height="24" fill="#000"/><rect x="1277.5" y="478.5" width="10" height="11" fill="#ff0000" stroke="#000"/><rect x="1298" y="380" width="1" height="125" fill="#000"/><rect x="1293.5" y="406.5" width="10" height="88" fill="#00fa7d" stroke="#000"/><rect x="1314" y="399" width="1" height="44" fill="#000"/><rect x="1309.5" y="415.5" width="10" height="3" fill="#ff0000" stroke="#000"/><rect x="1330" y="374" width="1" height="54" fill="#000"/><rect x="1325.5" y="394.5" width="10" height="31" fill="#00fa7d" stroke="#000"/><rect x="1346" y="380" width="1" height="46" fill="#000"/><rect x="1341.5" y="407.5" width="10" height="2" fill="#ff0000" stroke="#000"/><rect x="1362" y="378" width="1" height="43" fill="#000"/><rect x="1357.5" y="406.5" width="10" height="4" fill="#ff0000" stroke="#000"/><rect x="1378" y="391" width="1" height="71" fill="#000"/><rect x="1373.5" y="415.5" width="10" height="14" fill="#ff0000" stroke="#000"/><rect x="1394" y="414" width="1" height="48" fill="#000"/><rect x="1389.5" y="442.5" width="10" height="17" fill="#ff0000" stroke="#000"/><rect x="1410" y="361" width="1" height="112" fill="#000"/><rect x="1405.5" y="380.5" width="10" height="87" fill="#00fa7d" stroke="#000"/><rect x="1426" y="300" width="1" height="96" fill="#000"/><rect x="1421.5" y="369.5" width="10" height="27" fill="#00fa7d" stroke="#000"/><rect x="1442" y="304" width="1" height="51" fill="#000"/><rect x="1437.5" y="309.5" width="10" height="46" fill="#00fa7d" stroke="#000"/></g><path d="M1411,373 L1424,355" stroke="#0000ff" stroke-width="1.3" stroke-dasharray="2,4"/><path d="M1410.5,374.5 L1406.5,371 V373.5 H1405 V375.5 H1406.5 V378 Z" fill="#00ffff"/><path d="M1427,350.5 L1430.5,347 V354 Z" fill="#0000ff"/><rect x="1407" y="479" width="7" height="1" fill="#ff0000"/><path d="M1468.5,123 H1480.5 L1474.5,130 Z" fill="#000"/><path d="M5,131 L14,131 L9.5,136 Z" fill="#000"/><text x="20" y="137.5" font-size="11.5" fill="#000" text-anchor="start" font-weight="normal" textLength="77.5" lengthAdjust="spacingAndGlyphs" xml:space="preserve">EURGBP!,Daily</text><text x="106.3" y="137.5" font-size="12" fill="#000" text-anchor="start" font-weight="normal" textLength="44.5" lengthAdjust="spacingAndGlyphs" xml:space="preserve">0.87617</text><text x="156.3" y="137.5" font-size="12" fill="#000" text-anchor="start" font-weight="normal" textLength="44.5" lengthAdjust="spacingAndGlyphs" xml:space="preserve">0.87876</text><text x="206.3" y="137.5" font-size="12" fill="#000" text-anchor="start" font-weight="normal" textLength="44.5" lengthAdjust="spacingAndGlyphs" xml:space="preserve">0.87617</text><text x="256.3" y="137.5" font-size="12" fill="#000" text-anchor="start" font-weight="normal" textLength="44.5" lengthAdjust="spacingAndGlyphs" xml:space="preserve">0.87854</text><text x="1838" y="214.5" font-size="34" fill="#bdb76b" text-anchor="end" font-weight="normal" textLength="86" lengthAdjust="spacingAndGlyphs" xml:space="preserve">+33.3</text><rect x="1846" y="152" width="4" height="1" fill="#000"/><text x="1853" y="156.5" font-size="12" fill="#000" text-anchor="start" font-weight="normal" textLength="44" lengthAdjust="spacingAndGlyphs" xml:space="preserve">0.88650</text><rect x="1846" y="201" width="4" height="1" fill="#000"/><text x="1853" y="205.5" font-size="12" fill="#000" text-anchor="start" font-weight="normal" textLength="44" lengthAdjust="spacingAndGlyphs" xml:space="preserve">0.88400</text><rect x="1846" y="250" width="4" height="1" fill="#000"/><text x="1853" y="254.5" font-size="12" fill="#000" text-anchor="start" font-weight="normal" textLength="44" lengthAdjust="spacingAndGlyphs" xml:space="preserve">0.88150</text><rect x="1846" y="299" width="4" height="1" fill="#000"/><text x="1853" y="303.5" font-size="12" fill="#000" text-anchor="start" font-weight="normal" textLength="44" lengthAdjust="spacingAndGlyphs" xml:space="preserve">0.87900</text><rect x="1846" y="348" width="4" height="1" fill="#000"/><text x="1853" y="352.5" font-size="12" fill="#000" text-anchor="start" font-weight="normal" textLength="44" lengthAdjust="spacingAndGlyphs" xml:space="preserve">0.87650</text><rect x="1846" y="397" width="4" height="1" fill="#000"/><text x="1853" y="401.5" font-size="12" fill="#000" text-anchor="start" font-weight="normal" textLength="44" lengthAdjust="spacingAndGlyphs" xml:space="preserve">0.87400</text><rect x="1846" y="446" width="4" height="1" fill="#000"/><text x="1853" y="450.5" font-size="12" fill="#000" text-anchor="start" font-weight="normal" textLength="44" lengthAdjust="spacingAndGlyphs" xml:space="preserve">0.87150</text><rect x="1846" y="495" width="4" height="1" fill="#000"/><text x="1853" y="499.5" font-size="12" fill="#000" text-anchor="start" font-weight="normal" textLength="44" lengthAdjust="spacingAndGlyphs" xml:space="preserve">0.86905</text><rect x="1846" y="544" width="4" height="1" fill="#000"/><text x="1853" y="548.5" font-size="12" fill="#000" text-anchor="start" font-weight="normal" textLength="44" lengthAdjust="spacingAndGlyphs" xml:space="preserve">0.86655</text><rect x="1846" y="593" width="4" height="1" fill="#000"/><text x="1853" y="597.5" font-size="12" fill="#000" text-anchor="start" font-weight="normal" textLength="44" lengthAdjust="spacingAndGlyphs" xml:space="preserve">0.86405</text><rect x="1846" y="642" width="4" height="1" fill="#000"/><text x="1853" y="646.5" font-size="12" fill="#000" text-anchor="start" font-weight="normal" textLength="44" lengthAdjust="spacingAndGlyphs" xml:space="preserve">0.86155</text><rect x="1847" y="302" width="55" height="13" fill="#000"/><text x="1852" y="313" font-size="12" fill="#fff" text-anchor="start" font-weight="normal" textLength="45" lengthAdjust="spacingAndGlyphs" xml:space="preserve">0.87854</text><line x1="2" y1="691.5" x2="1845" y2="691.5" stroke="#c0c0c0" stroke-dasharray="3,3"/><line x1="2" y1="769.5" x2="1845" y2="769.5" stroke="#c0c0c0" stroke-dasharray="3,3"/><polyline points="2.5,710.0 18.5,698.8 34.5,693.8 50.5,691.8 66.5,691.3 82.5,697.6 98.5,707.6 114.5,717.0 130.5,719.6 146.5,715.6 162.5,720.0 178.5,734.5 194.5,746.6 210.5,743.3 226.5,725.7 242.5,714.0 258.5,715.2 274.5,728.7 290.5,738.8 306.5,745.1 322.5,747.6 338.5,756.4 354.5,764.3 370.5,772.5 386.5,775.7 402.5,780.6 418.5,776.5 434.5,763.9 450.5,749.5 466.5,747.9 482.5,761.3 498.5,772.8 514.5,777.6 530.5,771.1 546.5,755.3 562.5,729.4 578.5,703.3 594.5,696.2 610.5,702.1 626.5,719.6 642.5,730.0 658.5,747.2 674.5,761.2 690.5,777.3 706.5,784.6 722.5,786.5 738.5,779.7 754.5,771.0 770.5,757.7 786.5,756.2 802.5,762.4 818.5,776.4 834.5,780.6 850.5,774.7 866.5,761.2 882.5,751.5 898.5,744.0 914.5,745.3 930.5,743.7 946.5,747.7 962.5,742.8 978.5,733.1 994.5,720.6 1010.5,714.7 1026.5,726.3 1042.5,741.0 1058.5,756.0 1074.5,761.7 1090.5,764.7 1106.5,769.4 1122.5,774.5 1138.5,781.6 1154.5,781.1 1170.5,765.1 1186.5,739.7 1202.5,717.2 1218.5,708.7 1234.5,705.1 1250.5,703.0 1266.5,710.3 1282.5,727.2 1298.5,740.4 1314.5,735.4 1330.5,716.0 1346.5,701.2 1362.5,695.2 1378.5,701.4 1394.5,715.9 1410.5,730.0 1426.5,734.6 1442.5,718.9" fill="none" stroke="#ff0000" stroke-width="1" stroke-dasharray="3,3"/><polyline points="2.5,694.6 18.5,697.6 34.5,690.5 50.5,690.5 66.5,691.3 82.5,707.0 98.5,723.4 114.5,722.0 130.5,713.4 146.5,711.3 162.5,735.3 178.5,756.7 194.5,747.7 210.5,725.4 226.5,704.0 242.5,712.7 258.5,729.0 274.5,744.5 290.5,743.0 306.5,747.8 322.5,751.9 338.5,769.6 354.5,771.3 370.5,776.6 386.5,779.1 402.5,786.1 418.5,764.3 434.5,741.4 450.5,742.9 466.5,759.3 482.5,781.8 498.5,777.2 514.5,773.8 530.5,762.3 546.5,729.9 562.5,695.9 578.5,684.2 594.5,708.4 610.5,713.6 626.5,736.9 642.5,739.5 658.5,765.2 674.5,778.8 690.5,787.8 706.5,787.1 722.5,784.5 738.5,767.6 754.5,760.8 770.5,744.8 786.5,763.0 802.5,779.3 818.5,786.9 834.5,775.8 850.5,761.4 866.5,746.4 882.5,746.7 898.5,739.0 914.5,750.2 930.5,741.8 946.5,750.9 962.5,735.5 978.5,712.8 994.5,713.5 1010.5,717.8 1026.5,747.6 1042.5,757.6 1058.5,762.9 1074.5,764.7 1090.5,766.4 1106.5,777.1 1122.5,779.9 1138.5,787.8 1154.5,775.5 1170.5,731.9 1186.5,711.8 1202.5,707.8 1218.5,706.5 1234.5,701.1 1250.5,701.4 1266.5,728.4 1282.5,751.6 1298.5,741.1 1314.5,713.5 1330.5,693.6 1346.5,696.6 1362.5,695.4 1378.5,712.2 1394.5,740.2 1410.5,737.6 1426.5,726.1 1442.5,693.0" fill="none" stroke="#20b2aa" stroke-width="1"/><text x="6" y="678.5" font-size="12" fill="#000" text-anchor="start" font-weight="normal" textLength="169" lengthAdjust="spacingAndGlyphs" xml:space="preserve">Stoch(5,3,3) 78.8745 58.6257</text><text x="1849" y="677" font-size="12" fill="#000" text-anchor="start" font-weight="normal" xml:space="preserve">100</text><text x="1849" y="695.5" font-size="12" fill="#000" text-anchor="start" font-weight="normal" xml:space="preserve">80</text><text x="1849" y="773.5" font-size="12" fill="#000" text-anchor="start" font-weight="normal" xml:space="preserve">20</text><text x="1849" y="792" font-size="12" fill="#000" text-anchor="start" font-weight="normal" xml:space="preserve">0</text><rect x="1846" y="691" width="3" height="1" fill="#000"/><rect x="1846" y="769" width="3" height="1" fill="#000"/><rect x="2" y="796" width="1" height="4" fill="#000"/><text x="1" y="812" font-size="12.2" fill="#000" text-anchor="start" font-weight="normal" xml:space="preserve">26 Oct 2025</text><rect x="98" y="796" width="1" height="4" fill="#000"/><text x="97" y="812" font-size="12.2" fill="#000" text-anchor="start" font-weight="normal" xml:space="preserve">3 Nov 2025</text><rect x="194" y="796" width="1" height="4" fill="#000"/><text x="193" y="812" font-size="12.2" fill="#000" text-anchor="start" font-weight="normal" xml:space="preserve">11 Nov 2025</text><rect x="290" y="796" width="1" height="4" fill="#000"/><text x="289" y="812" font-size="12.2" fill="#000" text-anchor="start" font-weight="normal" xml:space="preserve">19 Nov 2025</text><rect x="386" y="796" width="1" height="4" fill="#000"/><text x="385" y="812" font-size="12.2" fill="#000" text-anchor="start" font-weight="normal" xml:space="preserve">27 Nov 2025</text><rect x="482" y="796" width="1" height="4" fill="#000"/><text x="481" y="812" font-size="12.2" fill="#000" text-anchor="start" font-weight="normal" xml:space="preserve">5 Dec 2025</text><rect x="578" y="796" width="1" height="4" fill="#000"/><text x="577" y="812" font-size="12.2" fill="#000" text-anchor="start" font-weight="normal" xml:space="preserve">15 Dec 2025</text><rect x="674" y="796" width="1" height="4" fill="#000"/><text x="673" y="812" font-size="12.2" fill="#000" text-anchor="start" font-weight="normal" xml:space="preserve">23 Dec 2025</text><rect x="770" y="796" width="1" height="4" fill="#000"/><text x="769" y="812" font-size="12.2" fill="#000" text-anchor="start" font-weight="normal" xml:space="preserve">1 Jan 2026</text><rect x="866" y="796" width="1" height="4" fill="#000"/><text x="865" y="812" font-size="12.2" fill="#000" text-anchor="start" font-weight="normal" xml:space="preserve">9 Jan 2026</text><rect x="962" y="796" width="1" height="4" fill="#000"/><text x="961" y="812" font-size="12.2" fill="#000" text-anchor="start" font-weight="normal" xml:space="preserve">19 Jan 2026</text><rect x="1058" y="796" width="1" height="4" fill="#000"/><text x="1057" y="812" font-size="12.2" fill="#000" text-anchor="start" font-weight="normal" xml:space="preserve">27 Jan 2026</text><rect x="1154" y="796" width="1" height="4" fill="#000"/><text x="1153" y="812" font-size="12.2" fill="#000" text-anchor="start" font-weight="normal" xml:space="preserve">4 Feb 2026</text><rect x="1250" y="796" width="1" height="4" fill="#000"/><text x="1249" y="812" font-size="12.2" fill="#000" text-anchor="start" font-weight="normal" xml:space="preserve">12 Feb 2026</text><rect x="1346" y="796" width="1" height="4" fill="#000"/><text x="1345" y="812" font-size="12.2" fill="#000" text-anchor="start" font-weight="normal" xml:space="preserve">20 Feb 2026</text><rect x="1442" y="796" width="1" height="4" fill="#000"/><text x="1441" y="812" font-size="12.2" fill="#000" text-anchor="start" font-weight="normal" xml:space="preserve">2 Mar 2026</text><rect x="0" y="820" width="1910" height="1" fill="#e3e3e3"/><rect x="1909" y="121" width="1" height="700" fill="#e3e3e3"/><rect x="0" y="821" width="1917" height="1" fill="#ffffff"/><rect x="0" y="822" width="1917" height="1" fill="#000"/><rect x="0" y="823" width="1917" height="1" fill="#ffffff"/><rect x="1915" y="823" width="1" height="24" fill="#ffffff"/><rect x="0" y="824" width="1917" height="23" fill="#f0f0f0"/><text x="17.7" y="840" font-size="15" fill="#6d6d6d" text-anchor="start" font-weight="normal" textLength="103.1" lengthAdjust="spacingAndGlyphs" xml:space="preserve">CHFJPY!,Weekly</text><rect x="136" y="825" width="1" height="19" fill="#909090"/><text x="150" y="840" font-size="15" fill="#6d6d6d" text-anchor="start" font-weight="normal" textLength="95" lengthAdjust="spacingAndGlyphs" xml:space="preserve">EURGBP!,Daily</text><rect x="260" y="825" width="1" height="19" fill="#909090"/><text x="274.4" y="840" font-size="15" fill="#6d6d6d" text-anchor="start" font-weight="normal" textLength="98.6" lengthAdjust="spacingAndGlyphs" xml:space="preserve">EURNZD!,Daily</text><rect x="388" y="825" width="1" height="19" fill="#909090"/><text x="400.6" y="840" font-size="15" fill="#6d6d6d" text-anchor="start" font-weight="normal" textLength="89.2" lengthAdjust="spacingAndGlyphs" xml:space="preserve">CHFJPY!,Daily</text><rect x="504" y="825" width="1" height="19" fill="#909090"/><text x="517.5" y="840" font-size="15" fill="#6d6d6d" text-anchor="start" font-weight="normal" textLength="99.5" lengthAdjust="spacingAndGlyphs" xml:space="preserve">USDDKK!,Daily</text><rect x="632" y="825" width="1" height="19" fill="#909090"/><text x="646" y="840" font-size="15" fill="#6d6d6d" text-anchor="start" font-weight="normal" textLength="84" lengthAdjust="spacingAndGlyphs" xml:space="preserve">USDDKK!,H4</text><rect x="744" y="825" width="1" height="19" fill="#909090"/><text x="757.7" y="840" font-size="15" fill="#6d6d6d" text-anchor="start" font-weight="normal" textLength="84.0" lengthAdjust="spacingAndGlyphs" xml:space="preserve">USDDKK!,H1</text><rect x="856" y="825" width="1" height="19" fill="#909090"/><text x="868.7" y="840" font-size="15" fill="#6d6d6d" text-anchor="start" font-weight="normal" textLength="94.1" lengthAdjust="spacingAndGlyphs" xml:space="preserve">USDDKK!,M15</text><rect x="977" y="825" width="1" height="19" fill="#909090"/><text x="988.8" y="840" font-size="15" fill="#6d6d6d" text-anchor="start" font-weight="normal" textLength="101.0" lengthAdjust="spacingAndGlyphs" xml:space="preserve">AUDUSD!,Daily</text><rect x="1103" y="825" width="1" height="19" fill="#909090"/><text x="1116" y="840" font-size="15" fill="#6d6d6d" text-anchor="start" font-weight="normal" textLength="93.6" lengthAdjust="spacingAndGlyphs" xml:space="preserve">NZDJPY!,Daily</text><path d="M1223.5,822 V846.5 H1347.5 V822" fill="#ffffff" stroke="#000" stroke-width="1"/><text x="1237.3" y="840" font-size="15" fill="#000" text-anchor="start" font-weight="normal" textLength="95.7" lengthAdjust="spacingAndGlyphs" xml:space="preserve">EURGBP!,Daily</text><path d="M1881,829 v8 l-5,-4z M1901,829 v8 l4.5,-4z" fill="#a0a0a0"/><rect x="0" y="847" width="1917" height="58" fill="#f0f0f0"/><path d="M3.5,855.5 L10.5,862.5 M10.5,855.5 L3.5,862.5" stroke="#000" stroke-width="1.6"/><rect x="0" y="870" width="16" height="35" fill="#d5e2ef"/><rect x="17.5" y="852.5" width="1893" height="60" fill="#ffffff" stroke="#a0a0a0"/><rect x="18" y="853" width="1892" height="25" fill="#fcfcfc"/><rect x="18" y="878" width="1892" height="1" fill="#e5e5e5"/><rect x="18" y="904" width="1892" height="1" fill="#d0d0d0"/><rect x="204" y="853" width="1" height="25" fill="#e5e5e5"/><rect x="464" y="853" width="1" height="25" fill="#e5e5e5"/><rect x="595" y="853" width="1" height="25" fill="#e5e5e5"/><rect x="695" y="853" width="1" height="25" fill="#e5e5e5"/><rect x="825" y="853" width="1" height="25" fill="#e5e5e5"/><rect x="969" y="853" width="1" height="25" fill="#e5e5e5"/><rect x="1113" y="853" width="1" height="25" fill="#e5e5e5"/><rect x="1256" y="853" width="1" height="25" fill="#e5e5e5"/><rect x="1401" y="853" width="1" height="25" fill="#e5e5e5"/><rect x="1545" y="853" width="1" height="25" fill="#e5e5e5"/><rect x="1689" y="853" width="1" height="25" fill="#e5e5e5"/><rect x="1909" y="853" width="1" height="25" fill="#e5e5e5"/><text x="24" y="871.7" font-size="15" fill="#000" text-anchor="start" font-weight="normal" textLength="44.5" lengthAdjust="spacingAndGlyphs" xml:space="preserve">Ordine</text><text x="359" y="871.7" font-size="15" fill="#000" text-anchor="start" font-weight="normal" textLength="78.3" lengthAdjust="spacingAndGlyphs" xml:space="preserve">Data/Orario</text><text x="558.3" y="871.7" font-size="15" fill="#000" text-anchor="start" font-weight="normal" textLength="29.0" lengthAdjust="spacingAndGlyphs" xml:space="preserve">Tipo</text><text x="660" y="871.7" font-size="15" fill="#000" text-anchor="start" font-weight="normal" textLength="29.3" lengthAdjust="spacingAndGlyphs" xml:space="preserve">Lotti</text><text x="764" y="871.7" font-size="15" fill="#000" text-anchor="start" font-weight="normal" textLength="55.3" lengthAdjust="spacingAndGlyphs" xml:space="preserve">Simbolo</text><text x="919.3" y="871.7" font-size="15" fill="#000" text-anchor="start" font-weight="normal" textLength="43.4" lengthAdjust="spacingAndGlyphs" xml:space="preserve">Prezzo</text><text x="1078.3" y="871.7" font-size="15" fill="#000" text-anchor="start" font-weight="normal" textLength="29.0" lengthAdjust="spacingAndGlyphs" xml:space="preserve">S / L</text><text x="1179.3" y="871.7" font-size="15" fill="#000" text-anchor="start" font-weight="normal" textLength="71.4" lengthAdjust="spacingAndGlyphs" xml:space="preserve">Take profit</text><text x="1352" y="871.7" font-size="15" fill="#000" text-anchor="start" font-weight="normal" textLength="43.3" lengthAdjust="spacingAndGlyphs" xml:space="preserve">Prezzo</text><text x="1450.3" y="871.7" font-size="15" fill="#000" text-anchor="start" font-weight="normal" textLength="89.0" lengthAdjust="spacingAndGlyphs" xml:space="preserve">Commissione</text><text x="1643.7" y="871.7" font-size="15" fill="#000" text-anchor="start" font-weight="normal" textLength="35.6" lengthAdjust="spacingAndGlyphs" xml:space="preserve">Swap</text><text x="1854.3" y="871.7" font-size="15" fill="#000" text-anchor="start" font-weight="normal" textLength="49.4" lengthAdjust="spacingAndGlyphs" xml:space="preserve">Profitto</text><path d="M450,863 h7 l-3.5,6z" fill="none" stroke="#777" stroke-width="0.8"/><text x="44.7" y="896.7" font-size="15" fill="#000" text-anchor="start" font-weight="normal" textLength="55.3" lengthAdjust="spacingAndGlyphs" xml:space="preserve">9375627</text><text x="331.7" y="896.7" font-size="15" fill="#000" text-anchor="start" font-weight="normal" textLength="127.3" lengthAdjust="spacingAndGlyphs" xml:space="preserve">2026.02.26 23:41:48</text><text x="565.7" y="896.7" font-size="15" fill="#000" text-anchor="start" font-weight="normal" textLength="23.3" lengthAdjust="spacingAndGlyphs" xml:space="preserve">buy</text><text x="663.3" y="896.7" font-size="15" fill="#000" text-anchor="start" font-weight="normal" textLength="27.4" lengthAdjust="spacingAndGlyphs" xml:space="preserve">0.25</text><text x="768.3" y="896.7" font-size="15" fill="#000" text-anchor="start" font-weight="normal" textLength="52.4" lengthAdjust="spacingAndGlyphs" xml:space="preserve">eurgbp!</text><text x="913.3" y="896.7" font-size="15" fill="#000" text-anchor="start" font-weight="normal" textLength="50.7" lengthAdjust="spacingAndGlyphs" xml:space="preserve">0.87521</text><text x="1057.3" y="896.7" font-size="15" fill="#000" text-anchor="start" font-weight="normal" textLength="51.0" lengthAdjust="spacingAndGlyphs" xml:space="preserve">0.87619</text><text x="1200.7" y="896.7" font-size="15" fill="#000" text-anchor="start" font-weight="normal" textLength="51.6" lengthAdjust="spacingAndGlyphs" xml:space="preserve">0.88056</text><text x="1345.3" y="896.7" font-size="15" fill="#000" text-anchor="start" font-weight="normal" textLength="51.0" lengthAdjust="spacingAndGlyphs" xml:space="preserve">0.87854</text><text x="1507.7" y="896.7" font-size="15" fill="#000" text-anchor="start" font-weight="normal" textLength="32.6" lengthAdjust="spacingAndGlyphs" xml:space="preserve">-1.50</text><text x="1652" y="896.7" font-size="15" fill="#000" text-anchor="start" font-weight="normal" textLength="32.3" lengthAdjust="spacingAndGlyphs" xml:space="preserve">-4.47</text><text x="1845.3" y="896.7" font-size="15" fill="#000" text-anchor="start" font-weight="normal" textLength="35.0" lengthAdjust="spacingAndGlyphs" xml:space="preserve">94.76</text><path d="M1891,884 L1903,896 M1903,884 L1891,896" stroke="#777" stroke-width="1.5"/><path d="M21.5,882.5 h11 l4,4 v14 h-15 z" fill="#f8f8f8" stroke="#777"/><circle cx="34.5" cy="898" r="4" fill="#2a8ae8"/></svg></body></html>
